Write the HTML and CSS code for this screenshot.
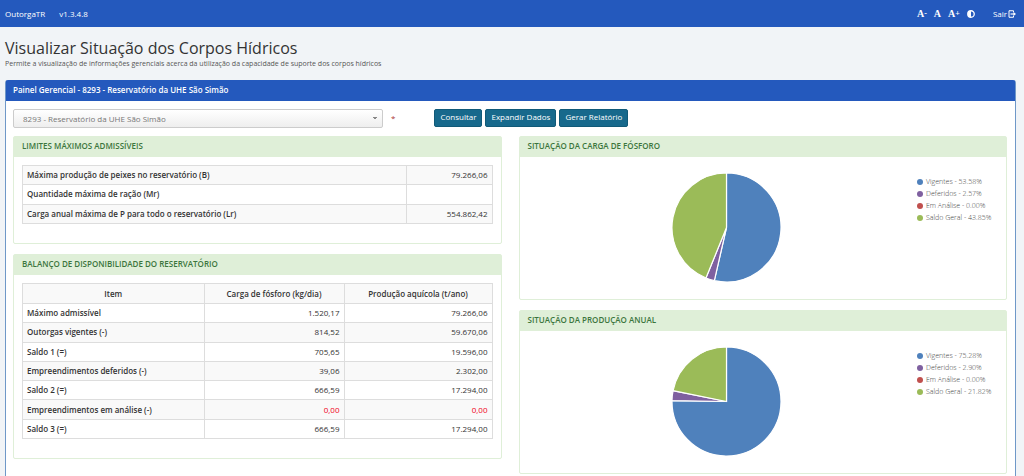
FILE: index.html
```html
<!DOCTYPE html>
<html lang="pt-BR">
<head>
<meta charset="utf-8">
<title>OutorgaTR</title>
<link rel="stylesheet" href="styles.css">
</head>
<body>
<nav class="navbar">
  <a class="nav-link" href="#">OutorgaTR</a>
  <span class="version">v1.3.4.8</span>
  <div class="tools">
    <button class="tool" type="button" aria-label="Diminuir fonte">A<span class="sign">-</span></button>
    <button class="tool" type="button" aria-label="Fonte normal">A</button>
    <button class="tool" type="button" aria-label="Aumentar fonte">A<span class="sign">+</span></button>
    <button class="tool" type="button" aria-label="Contraste">
      <svg class="icon-contrast" viewBox="0 0 16 16"><circle cx="8" cy="8" r="6.5" fill="none" stroke="#fff" stroke-width="2.6"/><path d="M8 2v12a6 6 0 0 1 0-12z" fill="#fff"/></svg>
    </button>
  </div>
  <a class="nav-link logout" href="#">Sair
    <svg class="icon-exit" viewBox="0 0 16 16" fill="none" stroke="#fff" stroke-width="2"><path d="M11 4.5V1.5H2v13h9v-3"/><path d="M5 8h7" stroke-width="2.4"/><path d="M11 3.8 16 8 11 12.2z" fill="#fff" stroke="none"/></svg>
  </a>
</nav>
<main class="page">
  <h1 class="title">Visualizar Situação dos Corpos Hídricos</h1>
  <p class="subtitle">Permite a visualização de informações gerenciais acerca da utilização da capacidade de suporte dos corpos hídricos</p>
  <section class="main-panel">
    <h2 class="main-heading">Painel Gerencial - 8293 - Reservatório da UHE São Simão</h2>
    <div class="main-body">
      <form class="filters">
        <select class="reservoir" aria-label="Reservatório"><option>8293 - Reservatório da UHE São Simão</option></select>
        <span class="required">*</span>
        <div class="actions">
          <button class="btn" type="button">Consultar</button>
          <button class="btn" type="button">Expandir Dados</button>
          <button class="btn" type="button">Gerar Relatório</button>
        </div>
      </form>
      <div class="columns">
        <div class="column">
          <section class="card">
            <h3 class="card-heading">LIMITES MÁXIMOS ADMISSÍVEIS</h3>
            <div class="card-body">
              <table class="data limits">
                <colgroup><col><col class="col-value"></colgroup>
                <tbody>
                  <tr><th scope="row">Máxima produção de peixes no reservatório (B)</th><td>79.266,06</td></tr>
                  <tr><th scope="row">Quantidade máxima de ração (Mr)</th><td></td></tr>
                  <tr><th scope="row">Carga anual máxima de P para todo o reservatório (Lr)</th><td>554.862,42</td></tr>
                </tbody>
              </table>
            </div>
          </section>
          <section class="card">
            <h3 class="card-heading">BALANÇO DE DISPONIBILIDADE DO RESERVATÓRIO</h3>
            <div class="card-body">
              <table class="data balance">
                <colgroup><col><col class="col-load"><col class="col-prod"></colgroup>
                <thead>
                  <tr><th scope="col">Item</th><th scope="col">Carga de fósforo (kg/dia)</th><th scope="col">Produção aquícola (t/ano)</th></tr>
                </thead>
                <tbody>
                  <tr><th scope="row">Máximo admissível</th><td>1.520,17</td><td>79.266,06</td></tr>
                  <tr><th scope="row">Outorgas vigentes (-)</th><td>814,52</td><td>59.670,06</td></tr>
                  <tr><th scope="row">Saldo 1 (=)</th><td>705,65</td><td>19.596,00</td></tr>
                  <tr><th scope="row">Empreendimentos deferidos (-)</th><td>39,06</td><td>2.302,00</td></tr>
                  <tr><th scope="row">Saldo 2 (=)</th><td>666,59</td><td>17.294,00</td></tr>
                  <tr class="alert"><th scope="row">Empreendimentos em análise (-)</th><td>0,00</td><td>0,00</td></tr>
                  <tr><th scope="row">Saldo 3 (=)</th><td>666,59</td><td>17.294,00</td></tr>
                </tbody>
              </table>
            </div>
          </section>
        </div>
        <div class="column">
          <section class="card">
            <h3 class="card-heading">SITUAÇÃO DA CARGA DE FÓSFORO</h3>
            <div class="chart">
              <div class="plot">
                <svg class="pie" viewBox="-54.5 -54.5 109 109" stroke="#fff" stroke-width="1.2">
                  <path fill="#4f81bc" d="M0 0V-54.5A54.5 54.5 0 1 1 -12.15 53.13Z"/>
                  <path fill="#7f60a0" d="M0 0L-12.15 53.13A54.5 54.5 0 0 1 -20.54 50.48Z"/>
                  <path fill="#9bbb58" d="M0 0L-20.54 50.48A54.5 54.5 0 0 1 0 -54.5Z"/>
                </svg>
              </div>
              <ul class="legend">
                <li class="vigentes">Vigentes - 53.58%</li>
                <li class="deferidos">Deferidos - 2.57%</li>
                <li class="analise">Em Análise - 0.00%</li>
                <li class="saldo">Saldo Geral - 43.85%</li>
              </ul>
            </div>
          </section>
          <section class="card">
            <h3 class="card-heading">SITUAÇÃO DA PRODUÇÃO ANUAL</h3>
            <div class="chart">
              <div class="plot">
                <svg class="pie" viewBox="-54.5 -54.5 109 109" stroke="#fff" stroke-width="1.2">
                  <path fill="#4f81bc" d="M0 0V-54.5A54.5 54.5 0 1 1 -54.49 -0.96Z"/>
                  <path fill="#7f60a0" d="M0 0L-54.49 -0.96A54.5 54.5 0 0 1 -53.42 -10.81Z"/>
                  <path fill="#9bbb58" d="M0 0L-53.42 -10.81A54.5 54.5 0 0 1 0 -54.5Z"/>
                </svg>
              </div>
              <ul class="legend">
                <li class="vigentes">Vigentes - 75.28%</li>
                <li class="deferidos">Deferidos - 2.90%</li>
                <li class="analise">Em Análise - 0.00%</li>
                <li class="saldo">Saldo Geral - 21.82%</li>
              </ul>
            </div>
          </section>
        </div>
      </div>
    </div>
  </section>
</main>
</body>
</html>
```
FILE: styles.css
```css
* { box-sizing: border-box; }

html { scrollbar-width: none; }

body {
  margin: 0;
  background: #f1f4f7;
  color: #333;
  font: 8px/12px "Open Sans", sans-serif;
}

h1, h2, h3, p, ul { margin: 0; padding: 0; }

button, select { font: inherit; }

.navbar {
  display: flex;
  align-items: center;
  height: 27px;
  padding: 0 8px 0 5px;
  background: #2459bd;
  color: #fff;
}

.nav-link { color: #fff; text-decoration: none; }
.version { margin-left: 14px; }

.tools {
  display: flex;
  align-items: center;
  gap: 7px;
  margin-left: auto;
}

.tool {
  display: flex;
  align-items: center;
  padding: 0;
  border: 0;
  background: none;
  color: #fff;
  font: bold 10px/12px "Liberation Serif", serif;
}

.sign { font-size: 8px; }
.icon-contrast { width: 8px; height: 8px; }

.logout {
  display: flex;
  align-items: center;
  gap: 1px;
  margin-left: 18px;
}

.icon-exit { width: 8px; height: 8px; }

.page { padding: 10px 8px 16px 5px; }

.title {
  font-size: 16px;
  font-weight: 400;
  line-height: 22px;
}

.subtitle {
  color: #555;
  font-size: 7px;
  line-height: 10px;
}

.main-panel {
  margin-top: 11px;
  border: 1px solid #6f98c8;
  border-top-color: #2459bd;
  border-radius: 3px;
  background: #fff;
}

.main-heading {
  padding: 3px 7px 5px;
  background: #2459bd;
  color: #fff;
  font-size: 8px;
  font-weight: 600;
  line-height: 12px;
}

.main-body { padding: 8px 8px 16px 7px; }

.filters {
  display: flex;
  align-items: flex-start;
  height: 19px;
}

.reservoir {
  appearance: none;
  width: 370px;
  height: 19px;
  padding: 0 9px;
  border: 1px solid #ccc;
  border-radius: 2px;
  color: #777;
  background:
    linear-gradient(#888, #888) no-repeat right 5px top 7px / 4px 1px,
    linear-gradient(#888, #888) no-repeat right 6px top 8px / 2px 1px,
    linear-gradient(#fff, #eee);
}

.required {
  margin-left: 8px;
  color: #a33;
  line-height: 18px;
}

.actions {
  display: flex;
  gap: 3px;
  margin-left: 39px;
}

.btn {
  height: 18px;
  padding: 0 5px 2px;
  border: 1px solid #115a78;
  border-radius: 2px;
  background: #17698c;
  color: #fff;
}

.columns {
  display: grid;
  grid-template-columns: 1fr 1fr;
  gap: 17px;
  align-items: start;
  margin-top: 8px;
}

.column {
  display: grid;
  gap: 10px;
}

.card {
  border: 1px solid #dfefd8;
  border-radius: 2px;
}

.card-heading {
  padding: 3px 8px 5px;
  background: #dfefd8;
  color: #3c763d;
  font-size: 8px;
  font-weight: 600;
  line-height: 12px;
}

.card-body { padding: 8px 8px 19px; }

.data {
  width: 100%;
  border-collapse: collapse;
  table-layout: fixed;
}

.data th, .data td {
  padding: 0 4px;
  border: 1px solid #ddd;
}

.data th { font-weight: 600; text-align: left; }
.data td { text-align: right; }
.data thead th { height: 20px; text-align: center; background: #f9f9f9; }
.limits tr:nth-child(odd), .balance tbody tr:nth-child(even) { background: #f9f9f9; }
.limits { height: 59px; }
.balance { height: 156px; }
.col-value { width: 86px; }
.col-load { width: 140px; }
.col-prod { width: 148px; }
.data .alert td { color: #f00020; }

.chart {
  display: flex;
  padding: 16px 16px 17px;
}

.plot {
  display: flex;
  flex: 1;
  justify-content: center;
}

.pie { width: 109px; height: 109px; }

.legend {
  width: 73px;
  padding-top: 3px;
  list-style: none;
  color: #444;
  font-size: 7px;
  font-weight: 300;
  line-height: 12px;
}

.legend li {
  display: flex;
  align-items: center;
  gap: 3px;
  white-space: nowrap;
}

.legend li::before {
  content: "";
  flex: none;
  width: 6px;
  height: 6px;
  border-radius: 50%;
  background: currentColor;
}

.legend .vigentes::before { background: #4f81bc; }
.legend .deferidos::before { background: #7f60a0; }
.legend .analise::before { background: #c0504e; }
.legend .saldo::before { background: #9bbb58; }
```
